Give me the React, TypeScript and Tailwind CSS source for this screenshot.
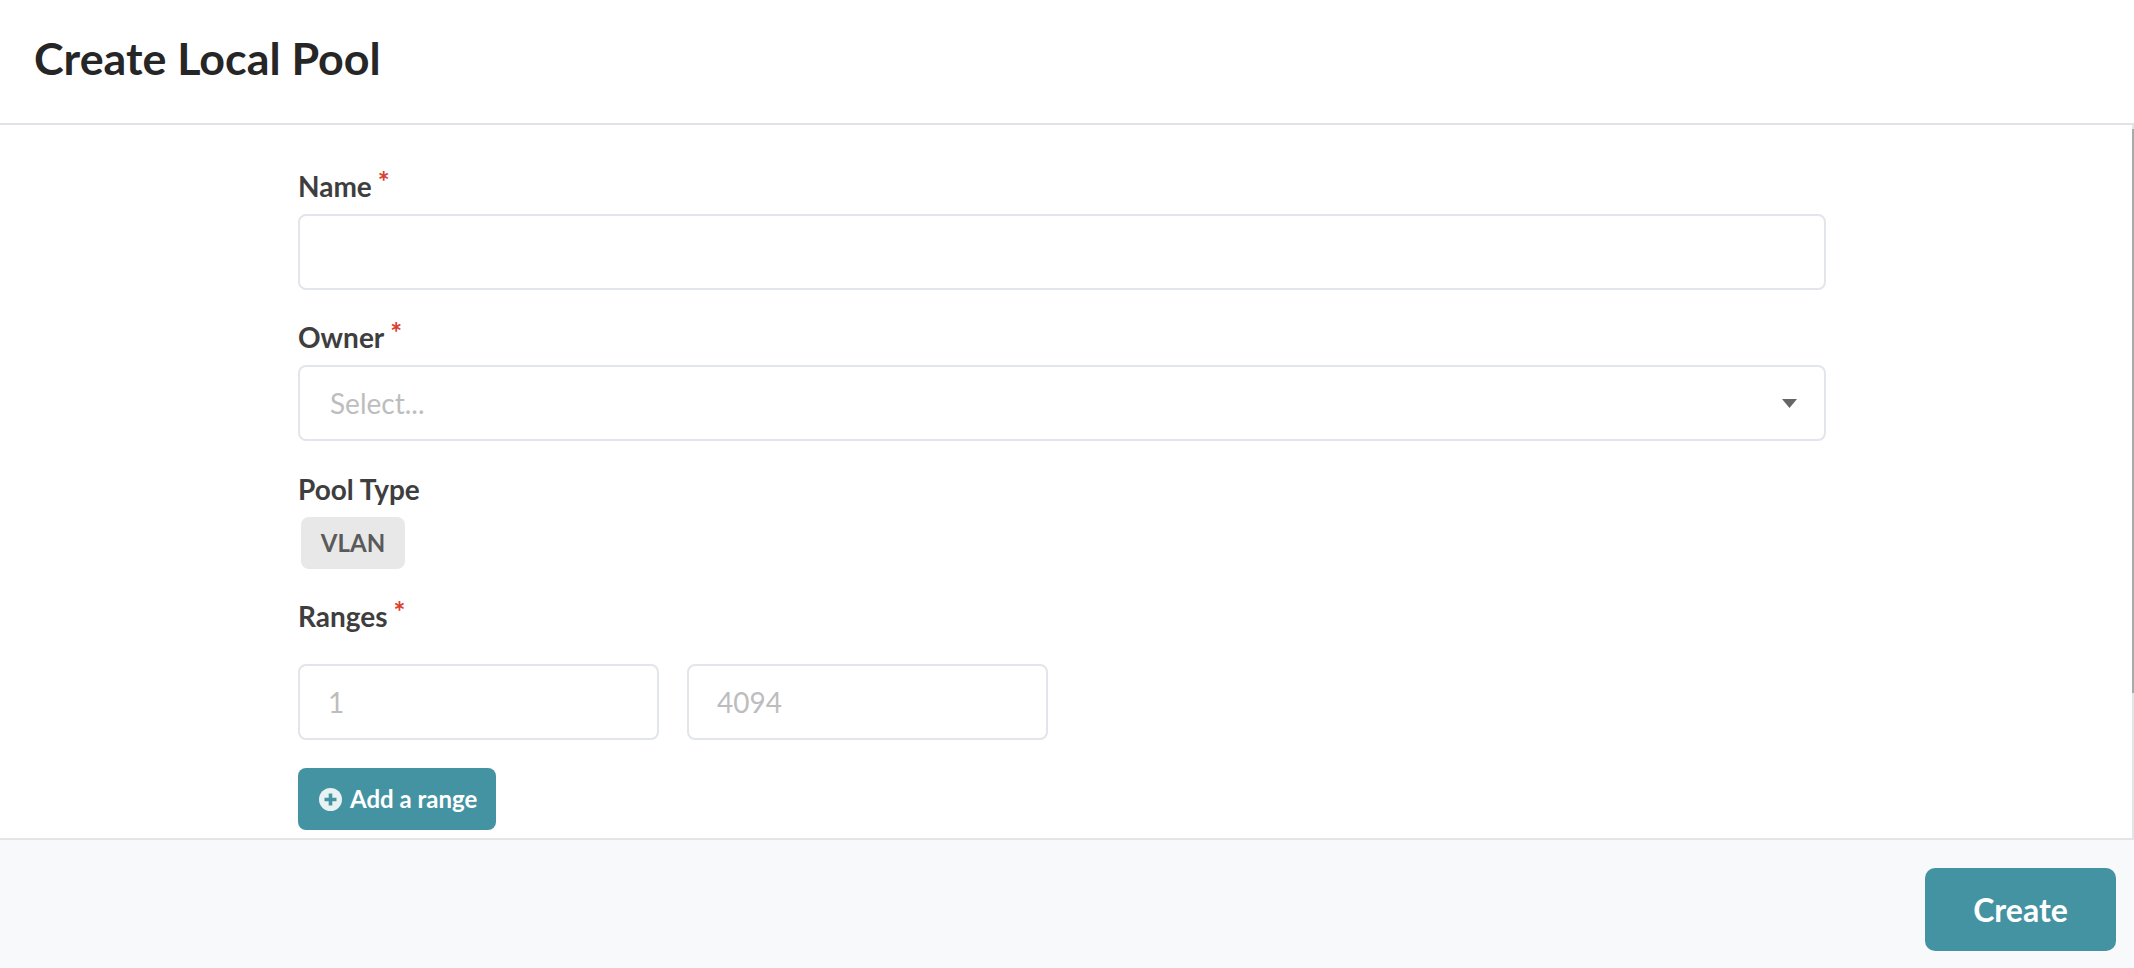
export default function App() {
  const label = "text-[28px] leading-[36px] font-bold text-[#3e3e3e]";
  const star = "text-[#d9402f] text-[28px] leading-[30px] font-bold ml-[6px] self-start -mt-[3px]";
  const field = "border-2 border-[#e2e5ea] rounded-lg bg-white h-[76px]";
  const placeholder = "text-[28px] text-[#bdbdbd]";
  const row = "flex items-center h-[36px] pb-[2px]";
  return (
    <div className="h-[968px] flex flex-col bg-white font-['Lato',sans-serif] overflow-hidden">
      <header className="h-[125px] shrink-0 border-b-2 border-[#dfe3e8] flex items-center pl-[34px] pb-[6px]">
        <h1 className="text-[44.8px] font-bold text-[#262626] leading-none">Create Local Pool</h1>
      </header>
      <main className="flex-1 min-h-0 border-r-2 border-[#e3e4e8] relative pl-[298px] pt-[44px]">
        <div className="w-[1528px]">
          <div className={row}>
            <span className={label}>Name</span>
            <span className={star}>*</span>
          </div>
          <div className={`${field} mt-[9px]`} />
          <div className={`${row} mt-[30px]`}>
            <span className={label}>Owner</span>
            <span className={star}>*</span>
          </div>
          <div className={`${field} mt-[9px] flex items-center justify-between pl-[30px] pr-[27px]`}>
            <span className={placeholder}>Select...</span>
            <svg width="15" height="9" viewBox="0 0 15 9"><path d="M0 0H15L7.5 9Z" fill="#666" /></svg>
          </div>
          <div className={`${row} mt-[31px]`}>
            <span className={label}>Pool Type</span>
          </div>
          <div className="ml-[3px] mt-[9px] w-[104px] h-[52px] bg-[#e8e8e8] rounded-lg flex items-center justify-center text-[24px] font-bold text-[#5a5a5a]">VLAN</div>
          <div className={`${row} mt-[30px]`}>
            <span className={label}>Ranges</span>
            <span className={star}>*</span>
          </div>
          <div className="flex gap-[28px] mt-[29px]">
            <div className={`${field} w-[361px] flex items-center pl-[28px]`}><span className={placeholder}>1</span></div>
            <div className={`${field} w-[361px] flex items-center pl-[28px]`}><span className={placeholder}>4094</span></div>
          </div>
          <button className="mt-[28px] w-[198px] h-[62px] bg-[#4493a3] rounded-lg flex items-center pl-[21px] gap-[8px] text-white text-[24px] font-bold">
            <svg width="23" height="23" viewBox="0 0 23 23">
              <circle cx="11.5" cy="11.5" r="11.5" fill="#e8f2f3" />
              <path d="M11.5 5.5V17.5M5.5 11.5H17.5" stroke="#4493a3" strokeWidth="3.6" />
            </svg>
            Add a range
          </button>
        </div>
        <div className="absolute top-[4px] -right-[2px] w-[2px] h-[564px] bg-[#a9a9a9]" />
      </main>
      <footer className="h-[130px] shrink-0 border-t-2 border-[#e3e4e8] bg-[#f8f9fb] flex items-start justify-end pr-[18px] pt-[28px]">
        <button className="w-[191px] h-[83px] bg-[#4493a3] rounded-[10px] text-white text-[32px] font-bold">Create</button>
      </footer>
    </div>
  );
}
